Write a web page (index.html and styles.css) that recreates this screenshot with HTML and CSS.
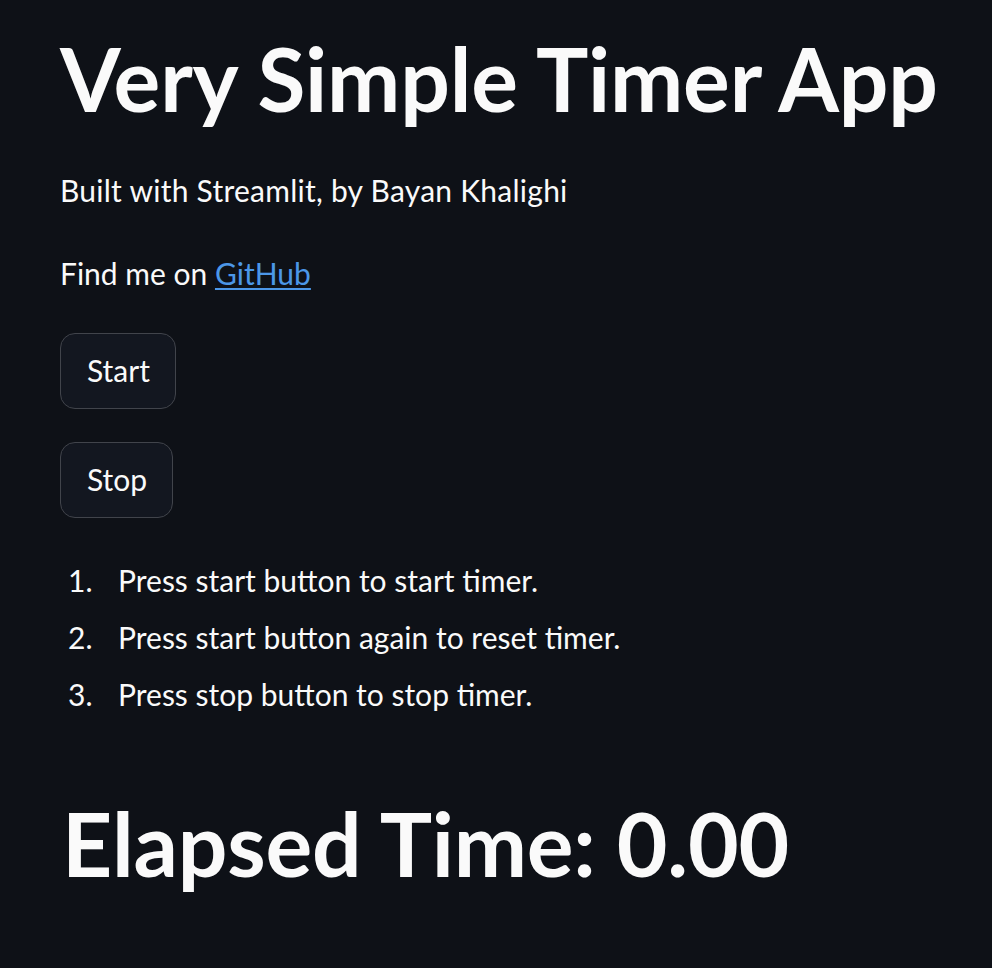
FILE: index.html
```html
<!DOCTYPE html>
<html lang="en">
<head>
<meta charset="utf-8">
<title>Very Simple Timer App</title>
<link rel="stylesheet" href="styles.css">
</head>
<body>
<main class="app">
  <h1 class="title">Very Simple Timer App</h1>
  <p class="text first">Built with Streamlit, by Bayan Khalighi</p>
  <p class="text">Find me on <a class="link" href="#">GitHub</a></p>
  <div class="buttons">
    <button class="btn" type="button">Start</button>
    <button class="btn" type="button">Stop</button>
  </div>
  <ol class="steps">
    <li class="step">Press start button to start timer.</li>
    <li class="step">Press start button again to reset timer.</li>
    <li class="step">Press stop button to stop timer.</li>
  </ol>
  <h1 class="elapsed">Elapsed Time: 0.00</h1>
</main>
</body>
</html>
```
FILE: styles.css
```css
html, body {
  margin: 0;
  padding: 0;
  background: #0e1117;
  color: #fafafa;
  font-family: Lato, "Noto Sans", sans-serif;
}

.app {
  padding: 26px 40px 0 60px;
  display: flex;
  flex-direction: column;
  align-items: flex-start;
}

.title,
.elapsed {
  margin: 0;
  font-size: 87.5px;
  font-weight: 700;
  line-height: 1.2;
  letter-spacing: -0.2px;
  white-space: nowrap;
}

.text {
  margin: 0;
  font-size: 30px;
  line-height: 48px;
}

.text.first {
  margin-top: 35px;
  margin-bottom: 34.6px;
  letter-spacing: 0.25px;
}

.link {
  color: #4c97e8;
  text-decoration: underline;
  text-underline-offset: 3px;
  text-decoration-thickness: 2px;
}

.buttons {
  margin-top: 36px;
  display: flex;
  flex-direction: column;
  align-items: flex-start;
  gap: 33px;
}

.btn {
  font-family: inherit;
  font-size: 30px;
  line-height: 48px;
  color: #fafafa;
  background: #131720;
  border: 1px solid #41444b;
  border-radius: 15px;
  padding: 12.5px 25px 13.5px 26px;
  margin: 0;
  cursor: pointer;
}

.steps {
  list-style: none;
  margin: 38.5px 0 0 0;
  padding: 0 0 0 8px;
  counter-reset: step;
}

.step {
  counter-increment: step;
  font-size: 30px;
  line-height: 48px;
  margin-bottom: 9.2px;
  display: flex;
}

.step:last-child {
  margin-bottom: 0;
}

.step::before {
  content: counter(step) ".";
  width: 50px;
  flex: none;
}

.elapsed {
  margin-top: 73px;
  margin-left: 2px;
}
```
